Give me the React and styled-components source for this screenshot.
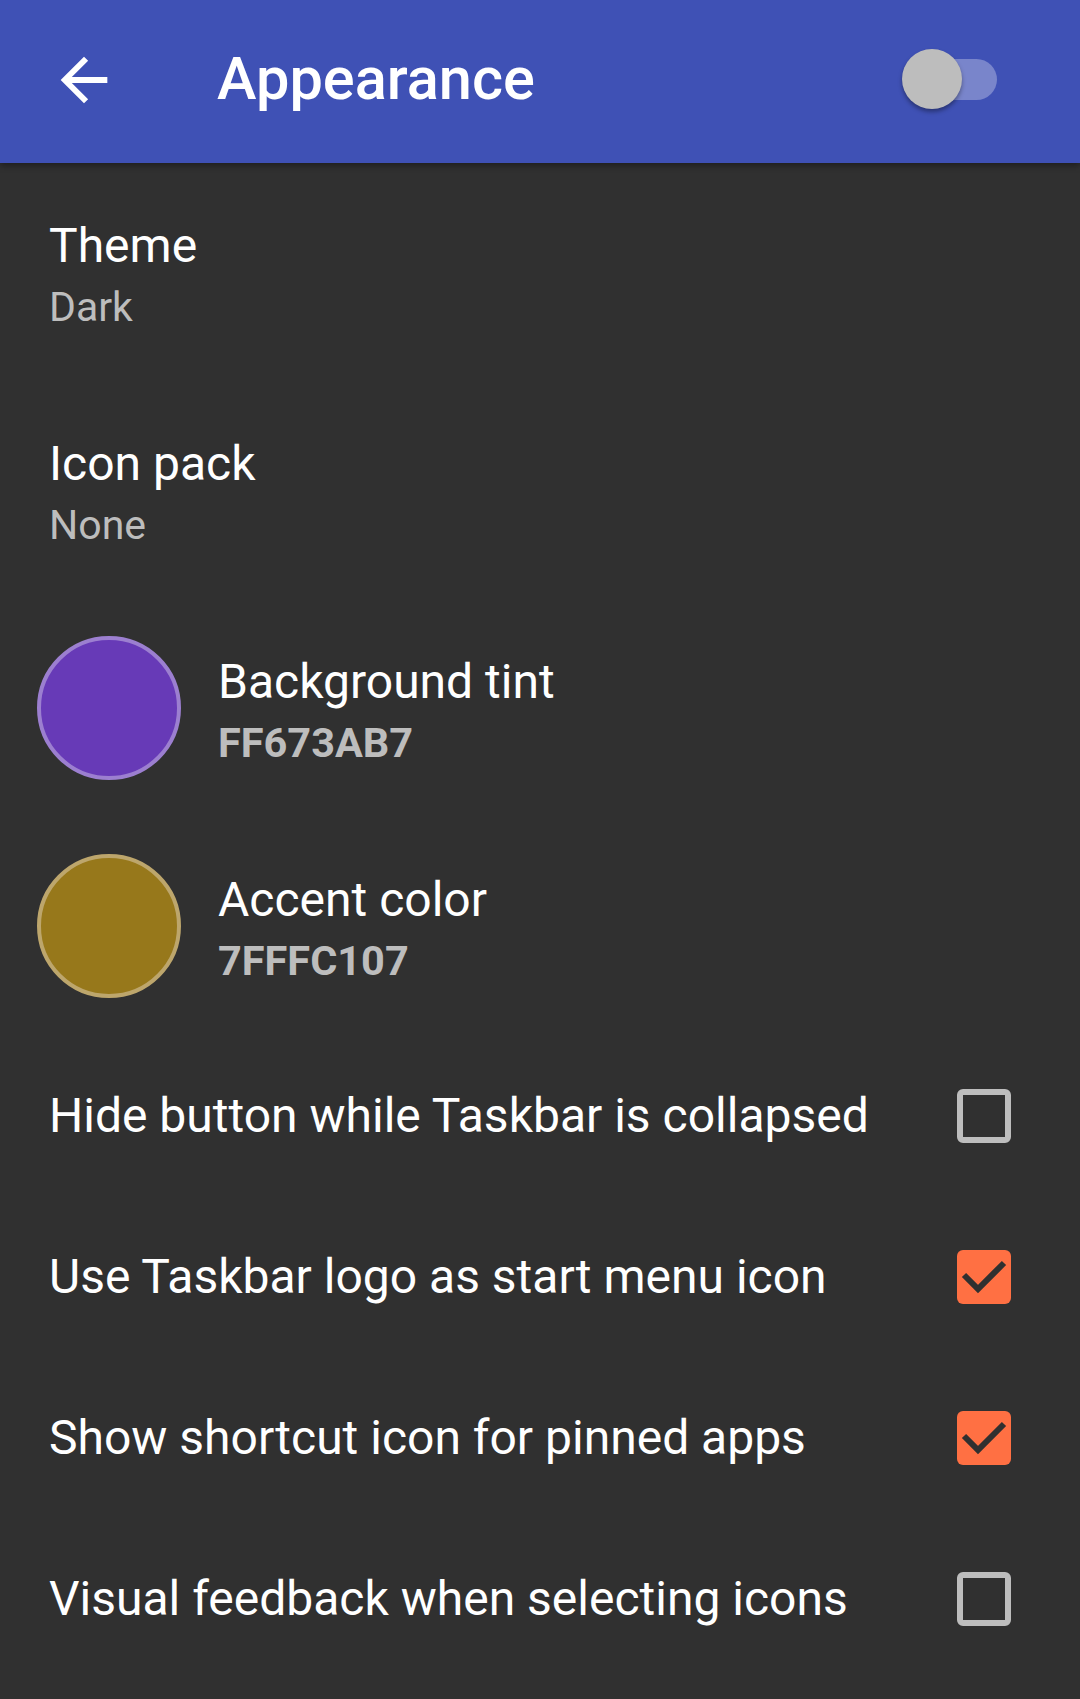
import React from "react";
import styled, { createGlobalStyle } from "styled-components";

const GlobalStyle = createGlobalStyle`
  html, body {
    margin: 0;
    padding: 0;
    background: #303030;
    font-family: "Roboto", "Noto Sans", sans-serif;
  }
  * {
    box-sizing: border-box;
  }
`;

const Page = styled.div`
  width: 1080px;
  min-height: 1699px;
  background: #303030;
  overflow: hidden;
`;

const Toolbar = styled.header`
  display: flex;
  align-items: center;
  height: 163px;
  padding: 0 83px 0 49px;
  background: #3f51b5;
  box-shadow: 0 3px 6px rgba(0, 0, 0, 0.35);
  position: relative;
  z-index: 1;
`;

const BackButton = styled.div`
  display: flex;
  width: 70px;
  height: 70px;
  margin-top: -4px;
  svg {
    width: 70px;
    height: 70px;
    fill: #fff;
  }
`;

const Title = styled.h1`
  flex: 1;
  margin: 0 0 0 98px;
  color: #fff;
  font-size: 59.5px;
  font-weight: 500;
  line-height: 1;
  margin-top: -4px;
`;

const Switch = styled.div`
  position: relative;
  width: 95px;
  height: 60px;
  margin-top: -6px;
  .track {
    position: absolute;
    right: 0;
    top: 10px;
    width: 80px;
    height: 41px;
    border-radius: 21px;
    background: #7985cb;
  }
  .thumb {
    position: absolute;
    left: 0;
    top: 0;
    width: 60px;
    height: 60px;
    border-radius: 50%;
    background: #bdbdbd;
    box-shadow: 0 3px 4px rgba(0, 0, 0, 0.35);
  }
`;

const List = styled.div`
  display: flex;
  flex-direction: column;
`;

const Row = styled.div`
  display: flex;
  align-items: center;
  height: ${(p) => p.$height}px;
  padding: ${(p) => (p.$swatch ? "0 0 0 37px" : "0 0 0 49px")};
  padding-right: 147px;
`;

const TextBlock = styled.div`
  display: flex;
  flex-direction: column;
  flex: 1;
  padding-top: 4px;
`;

const Primary = styled.div`
  color: #fff;
  font-size: 48px;
  line-height: 56px;
  white-space: nowrap;
`;

const Secondary = styled.div`
  margin-top: 9px;
  color: #bdbdbd;
  font-size: ${(p) => (p.$bold ? 41.5 : 41)}px;
  line-height: 48px;
  font-weight: ${(p) => (p.$bold ? 700 : 400)};
`;

const Swatch = styled.div`
  flex: none;
  width: 144px;
  height: 144px;
  margin-right: 37px;
  border-radius: 50%;
  background: ${(p) => p.$fill};
  border: 4px solid ${(p) => p.$ring};
`;

const CheckLabel = styled.div`
  flex: 1;
  color: #fff;
  font-size: 48px;
  line-height: 56px;
  white-space: nowrap;
`;

const Box = styled.div`
  flex: none;
  width: 54px;
  height: 54px;
  margin-right: -78px;
  border-radius: 6px;
  border: ${(p) => (p.$checked ? "none" : "6px solid #bdbdbd")};
  background: ${(p) => (p.$checked ? "#ff7043" : "transparent")};
  svg {
    display: block;
    width: 54px;
    height: 54px;
  }
`;

const Checkbox = ({ checked }) => (
  <Box $checked={checked}>
    {checked && (
      <svg viewBox="0 0 54 54">
        <polyline
          points="7,25 21,39 47,13"
          fill="none"
          stroke="#303030"
          strokeWidth="6"
        />
      </svg>
    )}
  </Box>
);

const checks = [
  { label: "Hide button while Taskbar is collapsed", checked: false },
  { label: "Use Taskbar logo as start menu icon", checked: true },
  { label: "Show shortcut icon for pinned apps", checked: true },
  { label: "Visual feedback when selecting icons", checked: false },
];

const App = () => {
  return (
    <>
      <GlobalStyle />
      <Page>
        <Toolbar>
          <BackButton>
            <svg viewBox="0 0 24 24">
              <path d="M20 11H7.83l5.59-5.59L12 4l-8 8 8 8 1.41-1.41L7.83 13H20v-2z" />
            </svg>
          </BackButton>
          <Title>Appearance</Title>
          <Switch>
            <div className="track" />
            <div className="thumb" />
          </Switch>
        </Toolbar>

        <List>
          <Row $height={218}>
            <TextBlock>
              <Primary>Theme</Primary>
              <Secondary>Dark</Secondary>
            </TextBlock>
          </Row>
          <Row $height={218}>
            <TextBlock>
              <Primary>Icon pack</Primary>
              <Secondary>None</Secondary>
            </TextBlock>
          </Row>
          <Row $height={218} $swatch>
            <Swatch $fill="#673ab7" $ring="#9c7fd0" />
            <TextBlock>
              <Primary>Background tint</Primary>
              <Secondary $bold>FF673AB7</Secondary>
            </TextBlock>
          </Row>
          <Row $height={218} $swatch>
            <Swatch $fill="#97781b" $ring="#bda66c" />
            <TextBlock>
              <Primary>Accent color</Primary>
              <Secondary $bold>7FFFC107</Secondary>
            </TextBlock>
          </Row>
          {checks.map((c) => (
            <Row key={c.label} $height={161}>
              <CheckLabel>{c.label}</CheckLabel>
              <Checkbox checked={c.checked} />
            </Row>
          ))}
        </List>
      </Page>
    </>
  );
};

export default App;
